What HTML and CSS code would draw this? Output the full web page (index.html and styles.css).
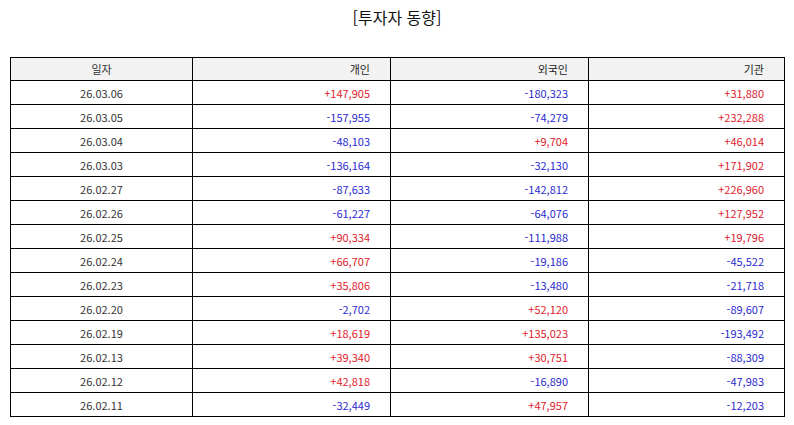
FILE: index.html
```html
<!DOCTYPE html>
<html lang="ko">
<head>
<meta charset="utf-8">
<link rel="stylesheet" href="styles.css">
</head>
<body>
<div class="page">
  <h1 class="title">[투자자 동향]</h1>
  <table class="grid">
    <colgroup>
      <col class="c1"><col class="c2"><col class="c3"><col class="c4">
    </colgroup>
    <thead>
      <tr><th class="date">일자</th><th>개인</th><th>외국인</th><th>기관</th></tr>
    </thead>
    <tbody>
      <tr><td class="date">26.03.06</td><td class="up">+147,905</td><td class="dn">-180,323</td><td class="up">+31,880</td></tr>
      <tr><td class="date">26.03.05</td><td class="dn">-157,955</td><td class="dn">-74,279</td><td class="up">+232,288</td></tr>
      <tr><td class="date">26.03.04</td><td class="dn">-48,103</td><td class="up">+9,704</td><td class="up">+46,014</td></tr>
      <tr><td class="date">26.03.03</td><td class="dn">-136,164</td><td class="dn">-32,130</td><td class="up">+171,902</td></tr>
      <tr><td class="date">26.02.27</td><td class="dn">-87,633</td><td class="dn">-142,812</td><td class="up">+226,960</td></tr>
      <tr><td class="date">26.02.26</td><td class="dn">-61,227</td><td class="dn">-64,076</td><td class="up">+127,952</td></tr>
      <tr><td class="date">26.02.25</td><td class="up">+90,334</td><td class="dn">-111,988</td><td class="up">+19,796</td></tr>
      <tr><td class="date">26.02.24</td><td class="up">+66,707</td><td class="dn">-19,186</td><td class="dn">-45,522</td></tr>
      <tr><td class="date">26.02.23</td><td class="up">+35,806</td><td class="dn">-13,480</td><td class="dn">-21,718</td></tr>
      <tr><td class="date">26.02.20</td><td class="dn">-2,702</td><td class="up">+52,120</td><td class="dn">-89,607</td></tr>
      <tr><td class="date">26.02.19</td><td class="up">+18,619</td><td class="up">+135,023</td><td class="dn">-193,492</td></tr>
      <tr><td class="date">26.02.13</td><td class="up">+39,340</td><td class="up">+30,751</td><td class="dn">-88,309</td></tr>
      <tr><td class="date">26.02.12</td><td class="up">+42,818</td><td class="dn">-16,890</td><td class="dn">-47,983</td></tr>
      <tr><td class="date">26.02.11</td><td class="dn">-32,449</td><td class="up">+47,957</td><td class="dn">-12,203</td></tr>
    </tbody>
  </table>
</div>
</body>
</html>
```

FILE: styles.css
```css
html, body {
  margin: 0;
  padding: 0;
  background: #ffffff;
}

.page {
  padding: 0 10px;
  font-family: "Noto Sans CJK KR", "Noto Sans", sans-serif;
  color: #222222;
}

.title {
  margin: 0;
  height: 57px;
  padding-top: 4px;
  box-sizing: border-box;
  text-align: center;
  font-size: 16px;
  font-weight: normal;
  line-height: 26px;
  color: #111111;
}

.grid {
  width: 774px;
  border-collapse: collapse;
  table-layout: fixed;
  font-size: 11px;
}

.c1 { width: 182px; }
.c2 { width: 198px; }
.c3 { width: 198px; }
.c4 { width: 196px; }

.grid th,
.grid td {
  border: 1px solid #000000;
  padding: 0 20px;
  text-align: right;
  font-weight: normal;
  line-height: 14px;
}

.grid thead tr { height: 23px; }
.grid tbody tr { height: 24px; }

.grid th {
  background: #f2f2f2;
  color: #222222;
}

.grid .date {
  text-align: center;
  color: #333333;
}

.up { color: #e0202a; }
.dn { color: #2a2ad0; }
```
